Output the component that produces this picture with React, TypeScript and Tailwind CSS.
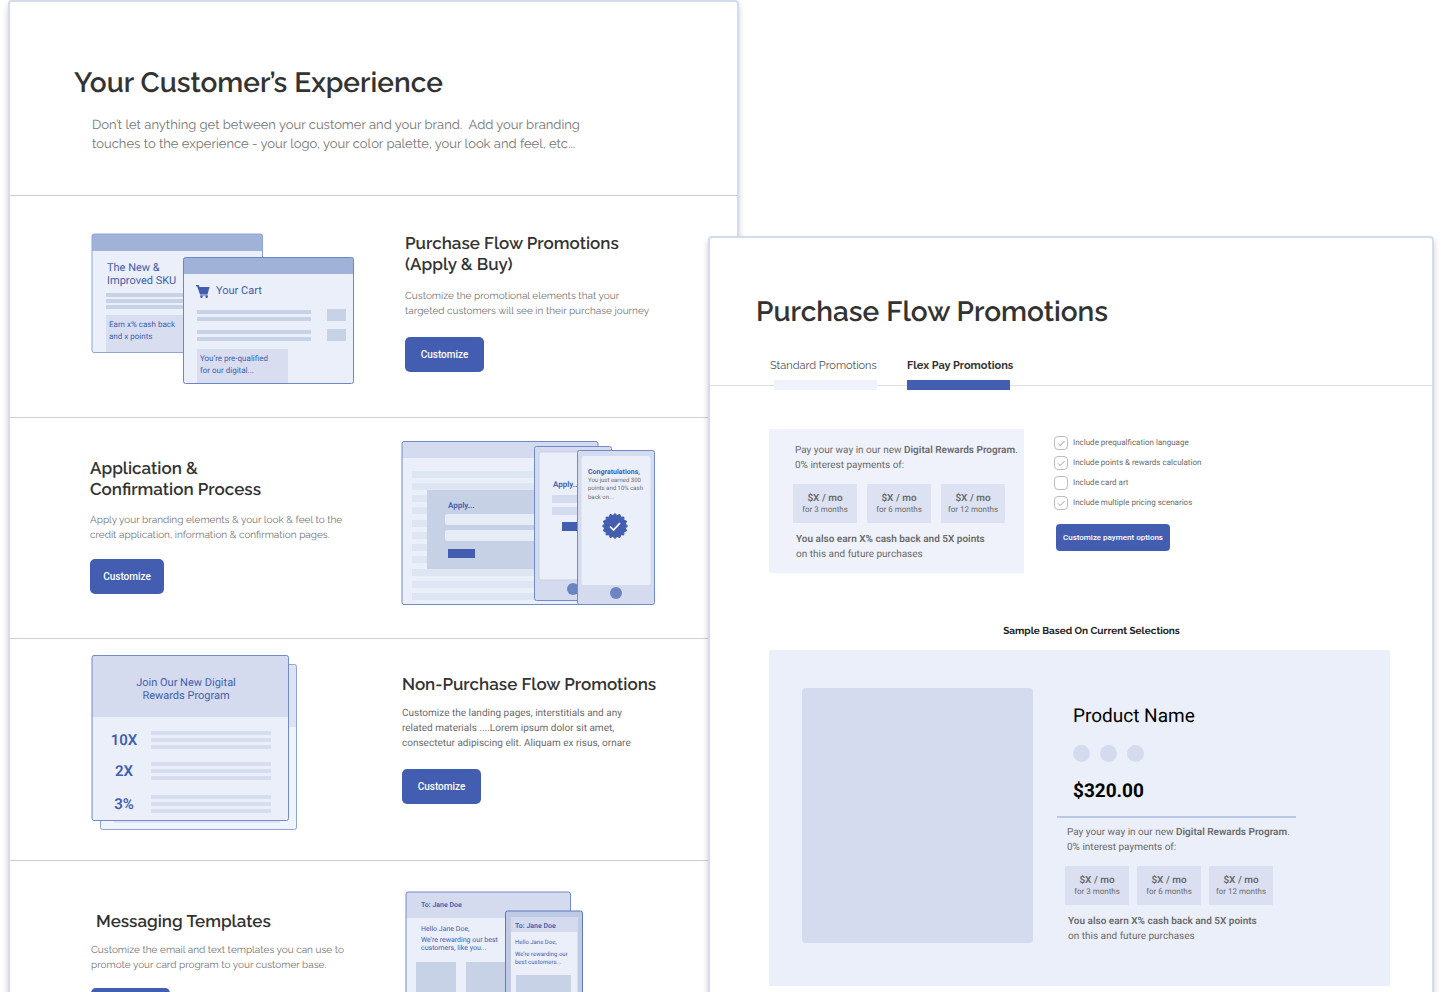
import React from 'react';

interface SectionProps {
  title: React.ReactNode;
  text: React.ReactNode;
  className: string;
  titleClass?: string;
  textClass: string;
  buttonClass: string;
}

const RALEWAY = "font-['Raleway','Lato',sans-serif]";
const ROBOTO = "font-['Roboto',sans-serif]";

const SectionCopy: React.FC<SectionProps> = ({ title, text, className, titleClass = '', textClass, buttonClass }) => (
  <div className={`flex flex-col items-start whitespace-nowrap ${className}`}>
    <h2 className={`${RALEWAY} text-[17px] leading-[21px] font-semibold text-[#333] ${titleClass}`}>{title}</h2>
    <p className={`leading-[15px] ${textClass}`}>{text}</p>
    <button type="button" className={`h-[35px] rounded-[5px] bg-[#435eb0] text-[10px] font-medium text-white ${ROBOTO} ${buttonClass}`}>
      Customize
    </button>
  </div>
);

/* Horizontal placeholder lines used by all the illustrations */
const Bars: React.FC<{ x: number; width: number; height: number; ys: number[]; fill: string }> = ({ x, width, height, ys, fill }) => (
  <>
    {ys.map((y) => (
      <rect key={y} x={x} y={y} width={width} height={height} fill={fill} />
    ))}
  </>
);

const CartArt = () => (
  <svg width="264" height="152" viewBox="0 0 264 152" className={ROBOTO} fill="#435eb0">
    <rect x="1" y="1" width="170.500" height="119" rx="2" fill="#ebeff9" />
    <path d="M1 18V3a2 2 0 0 1 2-2h166.500a2 2 0 0 1 2 2v15z" fill="#a1b2d8" />
    <rect x="1" y="1" width="170.500" height="118.500" rx="2" fill="none" stroke="#8fa5d8" />
    <text x="16" y="38" fontSize="11">The New &amp;</text>
    <text x="16" y="51" fontSize="11">Improved SKU</text>
    <Bars x={15} width={90} height={4} ys={[60, 66, 72]} fill="#c8d2e7" />
    <rect x="15" y="82" width="80" height="37" fill="#d8def0" />
    <text x="18" y="94" fontSize="8">Earn x% cash back</text>
    <text x="18" y="106" fontSize="8">and x points</text>

    <rect x="92.500" y="24.500" width="170" height="126" rx="2" fill="#ebeff9" />
    <path d="M92.500 41V26.500a2 2 0 0 1 2-2h166a2 2 0 0 1 2 2V41z" fill="#a1b2d8" />
    <rect x="92.500" y="24.500" width="170" height="126" rx="2" fill="none" stroke="#6f86c6" />
    <path d="M105 52h2.600l1 2h10l-2 7h-7.800l-2.600-7.600H105zM109 61.500h7.800v1H109z" />
    <circle cx="110.500" cy="63.700" r="1.300" />
    <circle cx="115.700" cy="63.700" r="1.300" />
    <text x="125" y="61" fontSize="11">Your Cart</text>
    <Bars x={106} width={114} height={4} ys={[77, 84, 97, 104]} fill="#c8d2e7" />
    <Bars x={236} width={19} height={12} ys={[76, 96]} fill="#c8d2e7" />
    <rect x="106" y="116" width="91" height="34" fill="#d8def0" />
    <text x="109" y="128" fontSize="8">You’re pre-qualified</text>
    <text x="109" y="140" fontSize="8">for our digital...</text>
  </svg>
);

const BADGE = Array.from({ length: 32 }, (_, i) => {
  const r = i % 2 === 0 ? 12.6 : 10.6;
  const a = (i * Math.PI) / 16;
  return `${(214 + r * Math.sin(a)).toFixed(2)},${(85 - r * Math.cos(a)).toFixed(2)}`;
}).join(' ');

const ApplyArt = () => (
  <svg width="255" height="165" viewBox="0 0 255 165" className={ROBOTO} fill="#435eb0">
    <rect x="1" y=".5" width="196" height="163" rx="2" fill="#ebeff9" />
    <path d="M1 17V2.500a2 2 0 0 1 2-2h192a2 2 0 0 1 2 2V17z" fill="#d4dbef" />
    <rect x="1" y=".5" width="196" height="163" rx="2" fill="none" stroke="#718aca" />
    <Bars x={11} width={124} height={7} ys={[30, 42, 54, 66, 79, 91, 103, 115, 128, 140, 152]} fill="#dfe6f3" />
    <rect x="26" y="49" width="110" height="79" fill="#c7d1e6" />
    <text x="47" y="67" fontSize="8" fontWeight="600">Apply...</text>
    <rect x="44" y="73" width="95" height="11" rx="2" fill="#e6ebf5" />
    <rect x="44" y="89" width="95" height="11" rx="2" fill="#e6ebf5" />
    <rect x="47" y="108" width="27" height="9" />

    <rect x="133.500" y="5.500" width="77" height="154" rx="2" fill="#d4dbef" stroke="#718aca" />
    <rect x="138" y="11" width="68" height="128" rx="2" fill="#ebeff9" stroke="#ccd1e2" />
    <text x="152" y="46" fontSize="8" fontWeight="600">Apply...</text>
    <Bars x={151} width={40} height={8} ys={[54, 66]} fill="#d4dbef" />
    <rect x="161" y="81" width="27" height="9" />
    <circle cx="172" cy="148" r="6" fill="#6c84c1" />

    <rect x="176.500" y="9.500" width="77" height="154" rx="2" fill="#d4dbef" stroke="#718aca" />
    <rect x="180.500" y="15" width="69" height="129" rx="2" fill="#ebeff9" />
    <text x="187" y="33" fontSize="7" fontWeight="700">Congratulations,</text>
    <g fontSize="6" fill="#6b6b70">
      <text x="187" y="41">You just earned 300</text>
      <text x="187" y="49">points and 10% cash</text>
      <text x="187" y="58">back on...</text>
    </g>
    <polygon points={BADGE} stroke="#435eb0" strokeLinejoin="round" />
    <path d="m209 85.500 3.500 3.500 6.500-7" fill="none" stroke="#fff" strokeWidth="1.700" />
    <circle cx="215" cy="152" r="6" fill="#6c84c1" />
  </svg>
);

const RewardsArt = () => (
  <svg width="207" height="176" viewBox="0 0 207 176" className={ROBOTO} fill="#435eb0">
    <rect x="9.500" y="9.500" width="196" height="165" rx="2" fill="#eff3fc" />
    <rect x="10" y="10" width="195" height="62" fill="#dde3f3" />
    <rect x="23" y="166" width="166" height="2" fill="#dde3f3" />
    <rect x="9.500" y="9.500" width="196" height="165" rx="2" fill="none" stroke="#8fa5d8" />
    <rect x="1" y=".5" width="196.500" height="165" rx="2" fill="#ebeff9" />
    <path d="M1 62V2.500a2 2 0 0 1 2-2h192.500a2 2 0 0 1 2 2V62z" fill="#d4dbef" />
    <rect x="1" y=".5" width="196.500" height="165" rx="2" fill="none" stroke="#718aca" />
    <g textAnchor="middle">
      <text x="95" y="31" fontSize="11">Join Our New Digital</text>
      <text x="95" y="44" fontSize="11">Rewards Program</text>
      <g fontSize="15" fontWeight="600">
        <text x="33" y="90">10X</text>
        <text x="33" y="121">2X</text>
        <text x="33" y="154">3%</text>
      </g>
    </g>
    <Bars x={60} width={120} height={4} ys={[76, 83, 90, 107, 114, 121, 140, 147, 154]} fill="#d6ddf0" />
  </svg>
);

const EmailArt = () => (
  <svg width="180" height="200" viewBox="0 0 180 200" className={ROBOTO} fill="#435eb0">
    <rect x="1" y="1" width="164.500" height="220" rx="2" fill="#ebeff9" />
    <path d="M1 27V3a2 2 0 0 1 2-2h160.500a2 2 0 0 1 2 2v24z" fill="#d4dbef" />
    <rect x="1" y="1" width="164.500" height="220" rx="2" fill="none" stroke="#718aca" />
    <g fontSize="7">
      <text x="16" y="16" fontWeight="600">To: Jane Doe</text>
      <text x="16" y="40">Hello Jane Doe,</text>
      <text x="16" y="51">We’re rewarding our best</text>
      <text x="16" y="59">customers, like you...</text>
    </g>
    <rect x="11" y="71" width="40" height="40" fill="#c8d2e7" />
    <rect x="61" y="71" width="40" height="40" fill="#c8d2e7" />

    <rect x="100.500" y="20" width="77" height="190" rx="2" fill="#bdcae8" stroke="#5f78bf" />
    <rect x="105.500" y="26" width="67.500" height="180" fill="#ebeff9" stroke="#c5cad9" />
    <rect x="106" y="26" width="67" height="15" fill="#d4dbef" />
    <text x="110" y="37" fontSize="7" fontWeight="600">To: Jane Doe</text>
    <g fontSize="6">
      <text x="110" y="53">Hello Jane Doe,</text>
      <text x="110" y="65">We’re rewarding our</text>
      <text x="110" y="73">best customers...</text>
    </g>
    <rect x="111" y="84" width="55" height="50" fill="#c8d2e7" />
  </svg>
);

const PaymentOffer: React.FC<{ tilesClass: string; tileColor: string }> = ({ tilesClass, tileColor }) => (
  <div className={`whitespace-nowrap text-[10px] leading-[15px] text-[#6b6b6b] ${ROBOTO}`}>
    <p className="pl-[2px]">
      Pay your way in our new <b className="font-semibold">Digital Rewards Program</b>.
      <br />
      0% interest payments of:
    </p>
    <ul className={`mt-[11px] flex ${tilesClass}`}>
      {[3, 6, 12].map((months) => (
        <li key={months} className={`flex h-[39px] w-16 flex-col items-center pt-[9px] ${tileColor}`}>
          <b className="leading-3 font-semibold">$X / mo</b>
          <span className="text-[8px] leading-[9px]">for {months} months</span>
        </li>
      ))}
    </ul>
    <p className="mt-[9px] pl-[3px]">
      <b className="font-semibold">You also earn X% cash back and 5X points</b>
      <br />
      on this and future purchases
    </p>
  </div>
);

const Option: React.FC<{ label: string; checked?: boolean }> = ({ label, checked = false }) => (
  <label className="flex items-center gap-[5px]">
    <span className="grid size-[14px]">
      <input type="checkbox" defaultChecked={checked} className="peer size-[14px] appearance-none rounded-[4px] border border-[#bdbdbd] bg-white [grid-area:1/1]" />
      <svg viewBox="0 0 14 14" className="invisible size-[14px] peer-checked:visible [grid-area:1/1]" fill="none" stroke="#a0a0a0">
        <path d="m4 7.300 2.200 2.200L10.500 5" />
      </svg>
    </span>
    {label}
  </label>
);

const ExperiencePanel = () => (
  <section className="flex-[731] rounded-[4px] border-2 border-[#d3dcee] bg-white shadow-[0_4px_6px_rgba(0,0,0,0.2)]">
    <header className={`h-[194px] border-b border-[#cfcfcf] pt-[63px] whitespace-nowrap ${RALEWAY}`}>
      <h1 className="pl-16 text-[28px] leading-9 font-semibold text-[#333]">Your Customer’s Experience</h1>
      <p className="mt-[15px] pl-[82px] text-[13px] leading-[19px] text-[#757575]">
        Don’t let anything get between your customer and your brand.&nbsp; Add your branding
        <br />
        touches to the experience - your logo, your color palette, your look and feel, etc...
      </p>
    </header>

    <div className="grid h-[222px] grid-cols-[314px_1fr] border-b border-[#cfcfcf] pl-[81px]">
      <div className="pt-[37px]"><CartArt /></div>
      <SectionCopy
        className="pt-[37px]"
        title={<>Purchase Flow Promotions<br />(Apply &amp; Buy)</>}
        text={<>Customize the promotional elements that your<br />targeted customers will see in their purchase journey</>}
        textClass={`mt-[14px] text-[10px] text-[#757575] ${RALEWAY}`}
        buttonClass="mt-[18px] w-[79px]"
      />
    </div>

    <div className="grid h-[221px] grid-cols-[311px_1fr] border-b border-[#cfcfcf] pl-20">
      <SectionCopy
        className="pt-10"
        title={<>Application &amp;<br />Confirmation Process</>}
        text={<>Apply your branding elements &amp; your look &amp; feel to the<br />credit application, information &amp; confirmation pages.</>}
        textClass={`mt-[13px] text-[10px] text-[#757575] ${RALEWAY}`}
        buttonClass="mt-4 w-[74px]"
      />
      <div className="pt-[23px]"><ApplyArt /></div>
    </div>

    <div className="grid h-[222px] grid-cols-[311px_1fr] border-b border-[#cfcfcf] pl-[81px]">
      <div className="pt-4"><RewardsArt /></div>
      <SectionCopy
        className="pt-[35px]"
        title="Non-Purchase Flow Promotions"
        text={<>Customize the landing pages, interstitials and any<br />related materials ....Lorem ipsum dolor sit amet,<br />consectetur adipiscing elit. Aliquam ex risus, ornare</>}
        textClass={`mt-[11px] text-[10px] text-[#6b6b6b] ${ROBOTO}`}
        buttonClass="mt-[18px] w-[79px]"
      />
    </div>

    <div className="grid grid-cols-[314px_1fr] pl-[81px]">
      <SectionCopy
        className="pt-[50px]"
        title="Messaging Templates"
        titleClass="pl-[5px]"
        text={<>Customize the email and text templates you can use to<br />promote your card program to your customer base.</>}
        textClass={`mt-[11px] text-[10px] text-[#757575] ${RALEWAY}`}
        buttonClass="mt-[15px] w-[79px]"
      />
      <div className="pt-[30px]"><EmailArt /></div>
    </div>
  </section>
);

const PromotionsPanel = () => (
  <section className="mt-[236px] -ml-[31px] flex-[726] rounded-[4px] border-2 border-[#d3dcee] bg-white whitespace-nowrap shadow-[0_4px_6px_rgba(0,0,0,0.2)]">
    <h1 className={`pt-14 pl-[46px] text-[28px] leading-9 font-semibold text-[#333] ${RALEWAY}`}>Purchase Flow Promotions</h1>

    <nav className={`mt-7 flex gap-[30px] border-b border-[#e0e0e0] pl-[60px] text-[11px] leading-4 text-[#4f4f4f] ${RALEWAY}`}>
      <button type="button" className="-mb-[5px] w-[107px] text-left">
        Standard Promotions
        <span className="mt-[6px] ml-1 block h-[10px] bg-[#eff2fb]" />
      </button>
      <button type="button" className="-mb-[5px] w-[103px] text-left font-bold text-[#333]">
        Flex Pay Promotions
        <span className="mt-[6px] block h-[10px] bg-[#435eb0]" />
      </button>
    </nav>

    <div className="mt-[43px] flex gap-[30px] pl-[59px]">
      <div className="h-[144px] w-[255px] bg-[#eff2fb] pt-[14px] pl-6">
        <PaymentOffer tilesClass="gap-[10px]" tileColor="bg-[#dce2f2]" />
      </div>
      <div className={`flex flex-col items-start gap-[6px] pt-[7px] text-[8px] leading-[14px] text-[#6b6b6b] ${ROBOTO}`}>
        <Option label="Include prequalfication language" checked />
        <Option label="Include points & rewards calculation" checked />
        <Option label="Include card art" />
        <Option label="Include multiple pricing scenarios" checked />
        <button type="button" className="mt-2 ml-[2px] h-[27px] w-[114px] rounded-[4px] bg-[#435eb0] text-[8px] font-medium text-white">
          Customize payment options
        </button>
      </div>
    </div>

    <h2 className={`mt-[51px] pl-[41px] text-center text-[10px] leading-4 font-bold text-[#222] ${RALEWAY}`}>Sample Based On Current Selections</h2>

    <div className="mt-[10px] mr-[42px] mb-10 ml-[59px] flex h-[336px] bg-[#ebeff9] pt-[38px] pl-[33px]">
      <div className="h-[255px] w-[231px] rounded-[4px] bg-[#d4dbef]" />
      <div className={`ml-6 ${ROBOTO}`}>
        <h3 className="mt-4 pl-4 text-[19px] leading-6 text-black">Product Name</h3>
        <div className="mt-[17px] flex gap-[10px] pl-4">
          <span className="size-[17px] rounded-full bg-[#d4dbef]" />
          <span className="size-[17px] rounded-full bg-[#d4dbef]" />
          <span className="size-[17px] rounded-full bg-[#d4dbef]" />
        </div>
        <p className="mt-[17px] pl-4 text-[19px] leading-6 font-bold text-black">$320.00</p>
        <hr className="mt-[13px] w-[239px] border-t-2 border-[#b9c6e6]" />
        <div className="mt-[7px] pl-2">
          <PaymentOffer tilesClass="gap-2" tileColor="bg-[#dae0f2]" />
        </div>
      </div>
    </div>
  </section>
);

export default function App() {
  return (
    <main className="flex h-screen items-start overflow-hidden bg-white px-2 [text-rendering:geometricPrecision]">
      <ExperiencePanel />
      <PromotionsPanel />
    </main>
  );
}
